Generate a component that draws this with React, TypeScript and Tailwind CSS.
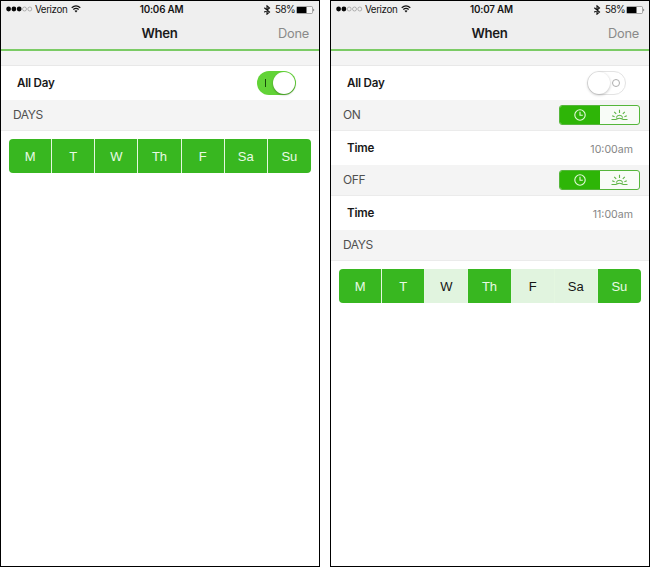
import React from 'react';

type Day = { label: string; on: boolean };

const NAMES = ['M', 'T', 'W', 'Th', 'F', 'Sa', 'Su'];
const days = (active: string[]): Day[] => NAMES.map((label) => ({ label, on: active.includes(label) }));

function Signal({ bars }: { bars: number }) {
  return (
    <svg width="28" height="8" viewBox="0 0 28 8" className="shrink-0">
      {[0, 1, 2, 3, 4].map((i) =>
        i < bars ? (
          <circle key={i} cx={3.6 + i * 5.3} cy="4" r="2.4" fill="#080808" />
        ) : (
          <circle key={i} cx={3.6 + i * 5.3} cy="4" r="2" fill="none" stroke="#8a8a8a" strokeWidth="0.6" />
        ),
      )}
    </svg>
  );
}

function Wifi() {
  return (
    <svg width="10" height="8" viewBox="0 0 10 8" className="ml-[4px] shrink-0" fill="none" stroke="#111" strokeWidth="1.25">
      <path d="M0.7 2.7 Q5 -0.9 9.3 2.7" />
      <path d="M2.3 4.6 Q5 2.3 7.7 4.6" />
      <path d="M3.5 5.8 Q5 4.7 6.5 5.8 L5 7.4 Z" fill="#111" stroke="none" />
    </svg>
  );
}

function StatusBar({ bars, time }: { bars: number; time: string }) {
  return (
    <div className="grid h-[17px] grid-cols-[1fr_auto_1fr] items-center pr-[4px] pl-[4px] leading-none text-[#151515]">
      <div className="flex items-center">
        <Signal bars={bars} />
        <span className="ml-[2px] w-[32px] text-[9.8px] tracking-[-0.4px] whitespace-nowrap">Verizon</span>
        <Wifi />
      </div>
      <span className="pl-[3px] text-[9.8px] font-semibold tracking-[-0.18px]">{time}</span>
      <div className="flex items-center justify-end">
        <svg width="8" height="10" viewBox="0 0 7 10" fill="none" stroke="#111" strokeWidth="1.1">
          <path d="M0.8 2.8 L6 7 L3.5 9.2 V0.8 L6 3 L0.8 7.2" />
        </svg>
        <span className="ml-[4px] w-[20px] text-[9.8px] tracking-[-0.55px]">58%</span>
        <svg width="19" height="8" viewBox="0 0 19 8" className="ml-[1px]">
          <rect x="0.5" y="0.5" width="16" height="7" rx="1" fill="#f8f8f8" stroke="#777" strokeWidth="0.6" />
          <rect x="1" y="1" width="9.5" height="6" fill="#000" />
          <path d="M17.5 2.5 Q19 4 17.5 5.5 Z" fill="#222" />
        </svg>
      </div>
    </div>
  );
}

function Header({ bars, time }: { bars: number; time: string }) {
  return (
    <header className="h-[50px] border-b-2 border-[#7bcb65] bg-[#efefef]">
      <StatusBar bars={bars} time={time} />
      <div className="grid h-[32px] grid-cols-[1fr_auto_1fr] items-center pr-[10px]">
        <span />
        <h1 className="pl-[9px] text-[13.2px] font-semibold tracking-[-0.35px] text-[#1b1b1b]">When</h1>
        <span className="text-right text-[12.8px] tracking-[-0.25px] text-[#8a8a8a]">Done</span>
      </div>
    </header>
  );
}

function Row({ label, children }: { label: string; children: React.ReactNode }) {
  return (
    <div className="flex h-[34px] items-center justify-between bg-white pl-4 text-[11.6px] tracking-[-0.2px] text-[#181818]">
      <span className="pt-[2px] font-semibold">{label}</span>
      {children}
    </div>
  );
}

function Section({ label, children }: { label: string; children?: React.ReactNode }) {
  return (
    <div className="flex h-[31px] items-center justify-between border-b border-[#ebebeb] bg-[#f4f4f4] pr-[9px] pl-3 text-[12px] tracking-[-0.4px] text-[#505050]">
      <span>{label}</span>
      {children}
    </div>
  );
}

function Toggle({ on }: { on: boolean }) {
  return on ? (
    <div className="mr-[23px] flex h-6 w-[39px] items-center justify-between rounded-full bg-[#62d337] pr-[1px] pl-2">
      <span className="h-[8px] w-px bg-[#174b0a]" />
      <span className="h-[22px] w-[22px] rounded-full bg-white shadow-[0_1px_2px_#0005]" />
    </div>
  ) : (
    <div className="mr-[23px] flex h-6 w-[39px] items-center justify-between rounded-full border border-[#e3e3e3] bg-white pr-[5px]">
      <span className="h-[22px] w-[22px] rounded-full bg-white shadow-[0_1px_3px_#0004]" />
      <span className="h-2 w-2 rounded-full border border-[#adadad]" />
    </div>
  );
}

function ModePicker() {
  return (
    <div className="flex h-5 w-[81px] overflow-hidden rounded-[3px] border border-[#55b63b] bg-[#f8fcf7]">
      <div className="flex w-10 items-center justify-center bg-[#2eb507]">
        <svg width="12" height="12" viewBox="0 0 12 12" fill="none" stroke="#e5fadd" strokeWidth="1.1">
          <circle cx="6" cy="6" r="5.2" />
          <path d="M6 2.7 V6.2 H8.8" />
        </svg>
      </div>
      <div className="flex flex-1 items-center justify-center">
        <svg width="17" height="12" viewBox="0 0 17 12" fill="none" stroke="#5fb447" strokeWidth="1.1">
          <path d="M0.5 10.5 H5 L6.6 9.3 M16.5 10.5 H12 L10.4 9.3" />
          <path d="M5.2 8.6 A3.5 3.5 0 0 1 11.8 8.6" />
          <path d="M6.2 10 Q8.5 8.6 10.8 10" />
          <path d="M8.5 0.8 V4 M3.2 2.8 L5.2 4.9 M13.8 2.8 L11.8 4.9 M1.2 6.7 L3.6 7.8 M15.8 6.7 L13.4 7.8" />
        </svg>
      </div>
    </div>
  );
}

function DayPicker({ items }: { items: Day[] }) {
  return (
    <div className="mt-2 ml-2 grid h-[34px] w-[302px] grid-cols-7 overflow-hidden rounded-[4px] font-['Liberation_Sans',Arial,sans-serif] text-[13px]">
      {items.map((d, i) => (
        <div
          key={d.label}
          className={`flex items-center justify-center pt-px ${i < 6 ? 'border-r border-[#e4f7e0]' : ''} ${
            d.on ? 'bg-[#38b720] text-[#e9fae5]' : 'bg-[#e1f4df] text-[#151515]'
          }`}
        >
          {d.label}
        </div>
      ))}
    </div>
  );
}

function Phone({ bars, time, children }: { bars: number; time: string; children: React.ReactNode }) {
  return (
    <section className="h-[567px] w-80 shrink-0 overflow-hidden border border-black bg-white">
      <Header bars={bars} time={time} />
      <div className="h-[15px] border-b border-[#e8e8e8] bg-[#f4f4f4]" />
      {children}
    </section>
  );
}

function Value({ children }: { children: string }) {
  return <span className="mr-4 pt-[3px] text-[10.6px] tracking-[0px] text-[#858585]">{children}</span>;
}

export default function App() {
  return (
    <main className="flex h-[567px] w-[650px] justify-between overflow-hidden bg-white font-['Inter',sans-serif]">
      <Phone bars={3} time="10:06 AM">
        <Row label="All Day">
          <Toggle on />
        </Row>
        <Section label="DAYS" />
        <DayPicker items={days(NAMES)} />
      </Phone>
      <Phone bars={2} time="10:07 AM">
        <Row label="All Day">
          <Toggle on={false} />
        </Row>
        <Section label="ON">
          <ModePicker />
        </Section>
        <Row label="Time">
          <Value>10:00am</Value>
        </Row>
        <Section label="OFF">
          <ModePicker />
        </Section>
        <Row label="Time">
          <Value>11:00am</Value>
        </Row>
        <Section label="DAYS" />
        <DayPicker items={days(['M', 'T', 'Th', 'Su'])} />
      </Phone>
    </main>
  );
}
